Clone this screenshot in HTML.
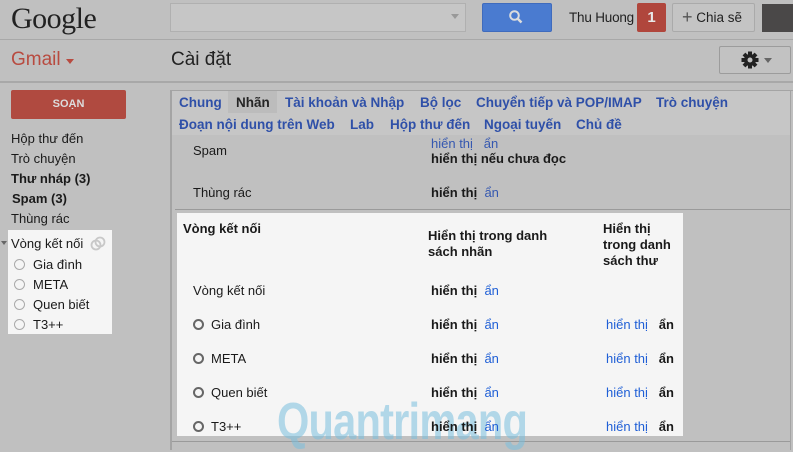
<!DOCTYPE html>
<html><head><meta charset="utf-8">
<style>
*{margin:0;padding:0;box-sizing:border-box}
body{width:793px;height:450px;overflow:hidden;background:#c0c0c0;font-family:"Liberation Sans",Arial,sans-serif;font-size:13px;color:#1a1a1a;position:relative}
.a{position:absolute;white-space:nowrap}
.b{font-weight:bold}
.lk{color:#3558b0}
.lk2{color:#1f5fd6}
.tab{color:#2f50a8;font-weight:bold;font-size:13.5px}
.rad{display:inline-block;width:11px;height:11px;border:2px solid #666;border-radius:50%;vertical-align:-1px;margin-right:7px}
.rad2{display:inline-block;width:11px;height:11px;border:1.5px solid #aaa;border-radius:50%;vertical-align:-1px;margin-right:8px}
</style></head><body>
<!-- header -->
<div class="a" style="left:11px;top:2px;font-family:'Liberation Serif',serif;font-size:30px;color:#222;letter-spacing:-0.5px">Google</div>
<div class="a" style="left:170px;top:3px;width:296px;height:29px;border:1px solid #b0b0b0;background:#c6c6c6"></div>
<svg class="a" style="left:451px;top:14px" width="8" height="5"><path d="M0 0h8L4 5z" fill="#999"/></svg>
<div class="a" style="left:482px;top:3px;width:70px;height:29px;background:#4a7bd0;border-radius:2px;border:1px solid #3f6bbd"></div>
<svg class="a" style="left:508px;top:9px" width="16" height="16"><circle cx="6.5" cy="6.5" r="4.3" stroke="#ddd" stroke-width="2" fill="none"/><path d="M9.5 9.5l4 4" stroke="#ddd" stroke-width="2.5"/></svg>
<div class="a" style="left:569px;top:10px;font-size:13.5px;letter-spacing:-0.2px;color:#222">Thu Huong</div>
<div class="a" style="left:637px;top:3px;width:29px;height:29px;background:#b0463c;border-radius:2px;color:#e8e8e8;font-weight:bold;font-size:15px;text-align:center;line-height:29px">1</div>
<div class="a" style="left:672px;top:3px;width:83px;height:29px;border:1px solid #aaa;border-radius:2px;background:#c4c4c4;font-size:13.5px;line-height:27px;padding-left:9px;color:#222"><span style="font-size:18px;color:#555;vertical-align:-1px">+</span> Chia sẽ</div>
<div class="a" style="left:762px;top:4px;width:31px;height:28px;background:#4a4848"></div>
<div class="a" style="left:0;top:39px;width:793px;height:1px;background:#a8a8a8"></div>
<!-- row 2 -->
<div class="a" style="left:11px;top:49px;font-size:19px;color:#b84b40">Gmail</div>
<svg class="a" style="left:66px;top:59px" width="8" height="5"><path d="M0 0h8L4 5z" fill="#b84b40"/></svg>
<div class="a" style="left:171px;top:49px;font-size:19px;color:#222">Cài đặt</div>
<div class="a" style="left:719px;top:46px;width:72px;height:28px;border:1px solid #9c9c9c;border-radius:2px;background:#c2c2c2"></div>
<svg class="a" style="left:740px;top:50px" width="20" height="20" viewBox="0 0 20 20"><g fill="#222"><circle cx="10" cy="10" r="6"/><rect x="8" y="1.5" width="4" height="17"/><rect x="1.5" y="8" width="17" height="4"/><rect x="8" y="1.5" width="4" height="17" transform="rotate(45 10 10)"/><rect x="8" y="1.5" width="4" height="17" transform="rotate(-45 10 10)"/></g><circle cx="10" cy="10" r="2.5" fill="#c2c2c2"/></svg>
<svg class="a" style="left:764px;top:58px" width="8" height="5"><path d="M0 0h8L4 5z" fill="#666"/></svg>
<div class="a" style="left:0;top:81px;width:793px;height:2px;background:#a8a8a8"></div>
<!-- left nav -->
<div class="a" style="left:11px;top:90px;width:115px;height:29px;background:#b04a40;border-radius:2px;color:#ddd;font-weight:bold;font-size:11px;text-align:center;line-height:29px">SOẠN</div>
<div class="a" style="left:11px;top:131px">Hộp thư đến</div>
<div class="a" style="left:11px;top:151px">Trò chuyện</div>
<div class="a b" style="left:11px;top:171px">Thư nháp (3)</div>
<div class="a b" style="left:12px;top:191px">Spam (3)</div>
<div class="a" style="left:11px;top:211px">Thùng rác</div>
<div class="a" style="left:8px;top:230px;width:104px;height:104px;background:#f5f5f5"></div>
<svg class="a" style="left:1px;top:241px" width="6" height="4"><path d="M0 0h6L3 4z" fill="#666"/></svg>
<div class="a" style="left:11px;top:236px">Vòng kết nối</div>
<svg class="a" style="left:90px;top:236px" width="16" height="16"><circle cx="6" cy="9" r="4.5" stroke="#c8c8c8" stroke-width="1.8" fill="none"/><circle cx="10" cy="6" r="4.5" stroke="#c8c8c8" stroke-width="1.8" fill="none"/></svg>
<div class="a" style="left:14px;top:257px"><span class="rad2"></span>Gia đình</div>
<div class="a" style="left:14px;top:277px"><span class="rad2"></span>META</div>
<div class="a" style="left:14px;top:297px"><span class="rad2"></span>Quen biết</div>
<div class="a" style="left:14px;top:317px"><span class="rad2"></span>T3++</div>
<!-- content -->
<div class="a" style="left:170px;top:90px;width:2px;height:360px;background:#a4a4a4"></div>
<div class="a" style="left:171px;top:90px;width:622px;height:1px;background:#a4a4a4"></div>
<div class="a" style="left:172px;top:91px;width:618px;height:44px;background:#c6c6c6"></div>
<div class="a" style="left:790px;top:90px;width:1px;height:360px;background:#a4a4a4"></div>
<div class="a" style="left:228px;top:91px;width:49px;height:22px;background:#bcbcbc"></div>
<div class="a tab" style="left:179px;top:95px">Chung</div>
<div class="a tab" style="left:236px;top:95px;color:#252525">Nhãn</div>
<div class="a tab" style="left:285px;top:95px">Tài khoản và Nhập</div>
<div class="a tab" style="left:420px;top:95px">Bộ lọc</div>
<div class="a tab" style="left:476px;top:95px">Chuyển tiếp và POP/IMAP</div>
<div class="a tab" style="left:656px;top:95px">Trò chuyện</div>
<div class="a tab" style="left:179px;top:117px">Đoạn nội dung trên Web</div>
<div class="a tab" style="left:350px;top:117px">Lab</div>
<div class="a tab" style="left:390px;top:117px">Hộp thư đến</div>
<div class="a tab" style="left:484px;top:117px">Ngoại tuyến</div>
<div class="a tab" style="left:576px;top:117px">Chủ đề</div>
<div class="a" style="left:193px;top:143px">Spam</div>
<div class="a lk" style="left:431px;top:136px">hiển thị &nbsp;&nbsp;ẩn</div>
<div class="a b" style="left:431px;top:151px">hiển thị nếu chưa đọc</div>
<div class="a" style="left:193px;top:185px">Thùng rác</div>
<div class="a" style="left:431px;top:185px"><b>hiển thị</b> &nbsp;<span class="lk">ẩn</span></div>
<div class="a" style="left:175px;top:209px;width:615px;height:1px;background:#9a9a9a"></div>
<div class="a" style="left:177px;top:213px;width:506px;height:223px;background:#f5f5f5"></div>
<div class="a" style="left:172px;top:441px;width:618px;height:1px;background:#9a9a9a"></div>
<!-- watermark -->
<div class="a" style="left:277px;top:392px;font-size:52px;font-weight:bold;color:rgba(120,190,220,0.55);letter-spacing:-1px;line-height:60px;transform:scaleX(0.8);transform-origin:0 0">Quantrimang</div>
<div class="a b" style="left:183px;top:221px">Vòng kết nối</div>
<div class="a b" style="left:428px;top:228px;line-height:16px;white-space:normal;width:140px">Hiển thị trong danh sách nhãn</div>
<div class="a b" style="left:603px;top:221px;line-height:16px;white-space:normal;width:80px">Hiển thị trong danh sách thư</div>
<div class="a" style="left:193px;top:283px">Vòng kết nối</div>
<div class="a" style="left:431px;top:283px"><b>hiển thị</b> &nbsp;<span class="lk2">ẩn</span></div>
<div class="a" style="left:193px;top:317px"><span class="rad"></span>Gia đình</div>
<div class="a" style="left:193px;top:351px"><span class="rad"></span>META</div>
<div class="a" style="left:193px;top:385px"><span class="rad"></span>Quen biết</div>
<div class="a" style="left:193px;top:419px"><span class="rad"></span>T3++</div>
<div class="a" style="left:431px;top:317px"><b>hiển thị</b> &nbsp;<span class="lk2">ẩn</span></div>
<div class="a" style="left:431px;top:351px"><b>hiển thị</b> &nbsp;<span class="lk2">ẩn</span></div>
<div class="a" style="left:431px;top:385px"><b>hiển thị</b> &nbsp;<span class="lk2">ẩn</span></div>
<div class="a" style="left:431px;top:419px"><b>hiển thị</b> &nbsp;<span class="lk2">ẩn</span></div>
<div class="a" style="left:606px;top:317px"><span class="lk2">hiển thị</span> &nbsp;&nbsp;<b>ẩn</b></div>
<div class="a" style="left:606px;top:351px"><span class="lk2">hiển thị</span> &nbsp;&nbsp;<b>ẩn</b></div>
<div class="a" style="left:606px;top:385px"><span class="lk2">hiển thị</span> &nbsp;&nbsp;<b>ẩn</b></div>
<div class="a" style="left:606px;top:419px"><span class="lk2">hiển thị</span> &nbsp;&nbsp;<b>ẩn</b></div>
</body></html>
